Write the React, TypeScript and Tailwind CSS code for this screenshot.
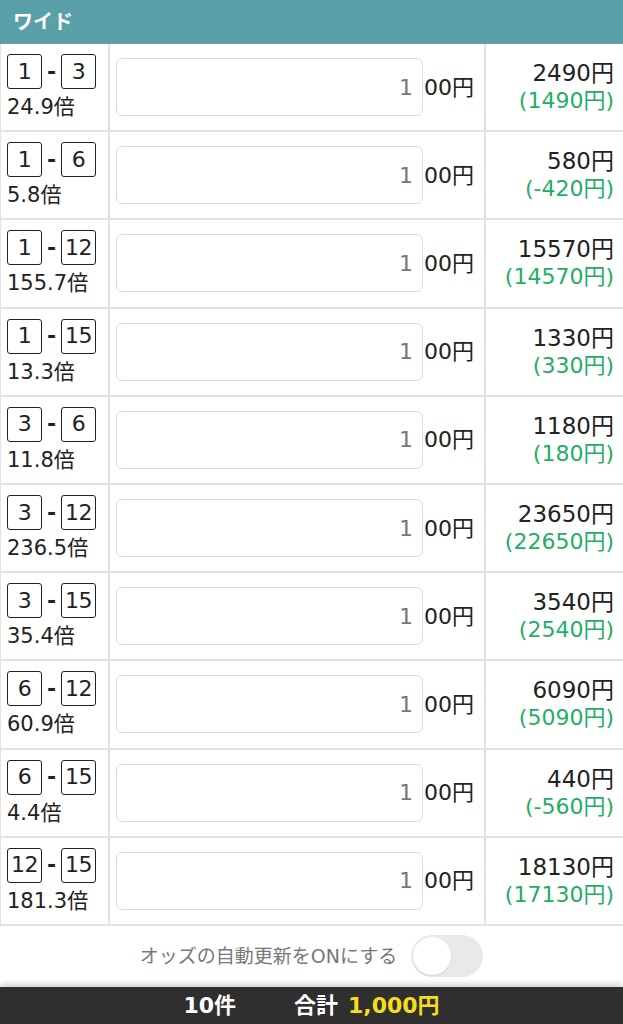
import React from "react";

interface Bet {
  a: number;
  b: number;
  odds: string;
  pay: number;
  profit: number;
}

const bets: Bet[] = [
  { a: 1, b: 3, odds: "24.9", pay: 2490, profit: 1490 },
  { a: 1, b: 6, odds: "5.8", pay: 580, profit: -420 },
  { a: 1, b: 12, odds: "155.7", pay: 15570, profit: 14570 },
  { a: 1, b: 15, odds: "13.3", pay: 1330, profit: 330 },
  { a: 3, b: 6, odds: "11.8", pay: 1180, profit: 180 },
  { a: 3, b: 12, odds: "236.5", pay: 23650, profit: 22650 },
  { a: 3, b: 15, odds: "35.4", pay: 3540, profit: 2540 },
  { a: 6, b: 12, odds: "60.9", pay: 6090, profit: 5090 },
  { a: 6, b: 15, odds: "4.4", pay: 440, profit: -560 },
  { a: 12, b: 15, odds: "181.3", pay: 18130, profit: 17130 },
];

const font = { fontFamily: '"DejaVu Sans", "Noto Sans CJK JP", sans-serif' };

const NumBox = ({ n }: { n: number }) => (
  <span className="flex h-[35px] w-[35px] items-center justify-center rounded-[3px] border-[1.5px] border-[#222] text-[22px] leading-none tracking-[-0.5px] text-[#222]">
    {n}
  </span>
);

const Row = ({ bet }: { bet: Bet }) => (
  <div className="flex h-[88.2px] border-b-2 border-[#e2e2e2]">
    <div className="flex w-[109px] shrink-0 flex-col justify-center border-r-2 border-[#e2e2e2] pl-[6px]">
      <div className="flex items-center">
        <NumBox n={bet.a} />
        <span className="w-[19px] text-center text-[22px] font-bold leading-none text-[#222]">-</span>
        <NumBox n={bet.b} />
      </div>
      <div className="mt-[5px] text-[21px] leading-[26px] text-[#222]">{bet.odds}倍</div>
    </div>
    <div className="flex w-[376px] shrink-0 items-center border-r-2 border-[#e2e2e2] pl-[6px]">
      <div className="flex h-[58px] w-[307px] items-center justify-end rounded-[6px] border border-[#dcdcdc] pr-[9px] text-[22px] text-[#777]">
        1
      </div>
      <span className="ml-[1px] text-[22px] text-[#222]">00円</span>
    </div>
    <div className="flex flex-1 flex-col items-end justify-center pr-[9px]">
      <span className="text-[23px] leading-[28px] text-[#222]">{bet.pay}円</span>
      <span className="text-[22px] leading-[28px] text-[#1fae63]">({bet.profit}円)</span>
    </div>
  </div>
);

export default function App() {
  return (
    <div className="flex h-[1024px] w-[623px] flex-col bg-white" style={font}>
      <div className="flex h-[44px] items-center bg-[#59a0a9] pl-[13px] text-[20px] font-bold text-white">
        ワイド
      </div>
      <div className="border-l border-[#e2e2e2]">
        {bets.map((bet) => (
          <Row key={`${bet.a}-${bet.b}`} bet={bet} />
        ))}
      </div>
      <div className="flex flex-1 items-center justify-center gap-[14px]">
        <span className="text-[19px] text-[#777]">オッズの自動更新をONにする</span>
        <div className="flex h-[42px] w-[72px] items-center rounded-full bg-[#e9e9e9] px-[2px]">
          <div className="h-[38px] w-[38px] rounded-full bg-white shadow-[0_1px_2px_rgba(0,0,0,0.1)]" />
        </div>
      </div>
      <div className="flex h-[37px] shrink-0 items-center justify-center bg-[#2f2f2f] text-[22px] font-bold text-white shadow-[0_-3px_6px_rgba(0,0,0,0.18)]">
        <span>10件</span>
        <span className="ml-[58px]">合計</span>
        <span className="ml-[10px] text-[#f6dd1c]">1,000円</span>
      </div>
    </div>
  );
}
